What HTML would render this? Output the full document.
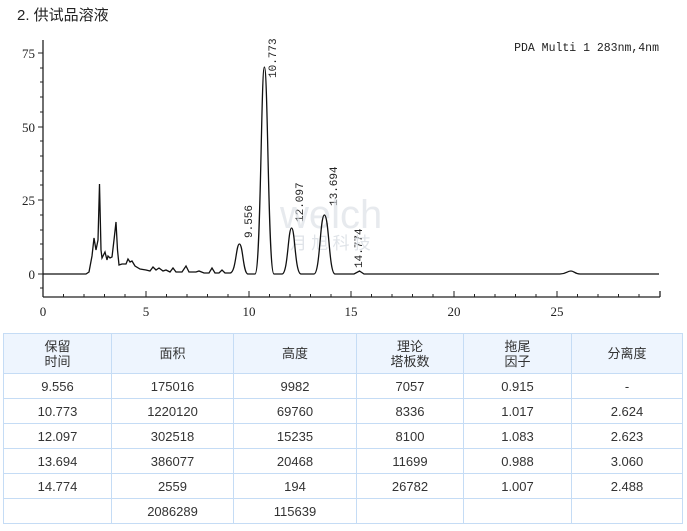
<!DOCTYPE html>
<html><head><meta charset="utf-8"><style>
body{margin:0;background:#fff;width:687px;height:531px;overflow:hidden;font-family:"Liberation Sans","Noto Sans CJK SC",sans-serif;}
.t{position:absolute;left:17px;top:4px;font-size:15px;color:#222;}
table{position:absolute;left:3px;top:333px;border-collapse:collapse;font-size:13px;color:#333;}
td{border:1px solid #c5dcf5;text-align:center;height:24px;padding:0;line-height:15px;}
tr.h td{background:#eef5fe;height:39px;}
</style></head><body>
<div class="t">2. 供试品溶液</div>
<svg width="687" height="331" style="position:absolute;left:0;top:0" font-family="Liberation Serif, serif">
<g stroke="#222" stroke-width="1.3" fill="none">
<line x1="43" y1="40" x2="43" y2="297"/>
<line x1="43" y1="297" x2="660" y2="297"/>
<line x1="660" y1="297" x2="660" y2="291"/>
</g>
<g stroke="#222" stroke-width="1">
<path d="M38 53H43M38 127H43M38 200H43M38 274H43M40 68H43M40 82H43M40 97H43M40 112H43M40 141H43M40 156H43M40 171H43M40 185H43M40 215H43M40 230H43M40 244H43M40 259H43M40 288H43"/>
<path d="M63.5 297v-3M84 297v-3M104.5 297v-3M125 297v-3M146 297v-6M166.5 297v-3M187 297v-3M207.5 297v-3M228 297v-3M249 297v-6M269.5 297v-3M290 297v-3M310.5 297v-3M331 297v-3M351 297v-6M371.5 297v-3M392 297v-3M412.5 297v-3M433 297v-3M454 297v-6M474.5 297v-3M495 297v-3M515.5 297v-3M536 297v-3M557 297v-6M577.5 297v-3M598 297v-3M618.5 297v-3M639 297v-3"/>
</g>
<g font-size="13" fill="#222">
<text x="35" y="58" text-anchor="end">75</text>
<text x="35" y="132" text-anchor="end">50</text>
<text x="35" y="205" text-anchor="end">25</text>
<text x="35" y="279" text-anchor="end">0</text>
<text x="43" y="316" text-anchor="middle">0</text>
<text x="146" y="316" text-anchor="middle">5</text>
<text x="249" y="316" text-anchor="middle">10</text>
<text x="351" y="316" text-anchor="middle">15</text>
<text x="454" y="316" text-anchor="middle">20</text>
<text x="557" y="316" text-anchor="middle">25</text>
<text x="659" y="51" text-anchor="end" font-family="Liberation Mono, monospace" font-size="11.5">PDA Multi 1 283nm,4nm</text>
</g>
<g font-size="11" fill="#222" font-family="Liberation Mono, monospace">
<text transform="translate(252,238) rotate(-90)">9.556</text>
<text transform="translate(276,78) rotate(-90)">10.773</text>
<text transform="translate(303,222) rotate(-90)">12.097</text>
<text transform="translate(337,206) rotate(-90)">13.694</text>
<text transform="translate(362,268) rotate(-90)">14.774</text>
</g>
<text x="280" y="228" font-size="40" fill="#d8dde3" opacity="0.6" font-family="Liberation Sans, sans-serif">welch</text>
<text x="290" y="249" font-size="17" fill="#d8dde3" opacity="0.8">月 旭 科 技</text>
<path fill="none" stroke="#111" stroke-width="1.3" d="M43 274 L86 274 L89 272 L92 256 L94 238 L96 250 L98 240 L99.5 184 L101 250 L102 258 L105 252 L107 260 L108 256 L110 258 L112 257 L114 240 L116 222 L117.5 250 L119 265 L122 264 L126 264 L128 259 L130 262 L132 261 L135 266 L140 269 L146 270 L150 271 L153 267 L156 270 L159 268 L163 271 L166 270 L170 272 L173 268 L176 272 L182 272 L186 266 L189 272 L196 272 L199 271 L204 273 L209 273 L212 268 L215 273 L219 273 L222 270 L225 273 L230 273 C236 273 236 244 239.4 244 C243 244 243 274 248 274 L255 274 C261 274 261 67 264.4 67 C268 67 268 274 274 274 L282 274 C288 274 288 228 291.6 228 C295 228 295 274 301 274 L314 274 C320 274 320 215 324.4 215 C329 215 329 274 335 274 L354 274 L359.5 271 L364 274 L560 274 C566 274 567 271 571 271 C574 271 575 274 580 274 L659 274"/>
</svg>
<table>
<colgroup><col style="width:108px"><col style="width:122px"><col style="width:123px"><col style="width:107px"><col style="width:108px"><col style="width:111px"></colgroup>
<tr class="h"><td>保留<br>时间</td><td>面积</td><td>高度</td><td>理论<br>塔板数</td><td>拖尾<br>因子</td><td>分离度</td></tr>
<tr><td>9.556</td><td>175016</td><td>9982</td><td>7057</td><td>0.915</td><td>-</td></tr>
<tr><td>10.773</td><td>1220120</td><td>69760</td><td>8336</td><td>1.017</td><td>2.624</td></tr>
<tr><td>12.097</td><td>302518</td><td>15235</td><td>8100</td><td>1.083</td><td>2.623</td></tr>
<tr><td>13.694</td><td>386077</td><td>20468</td><td>11699</td><td>0.988</td><td>3.060</td></tr>
<tr><td>14.774</td><td>2559</td><td>194</td><td>26782</td><td>1.007</td><td>2.488</td></tr>
<tr><td></td><td>2086289</td><td>115639</td><td></td><td></td><td></td></tr>
</table>
</body></html>
